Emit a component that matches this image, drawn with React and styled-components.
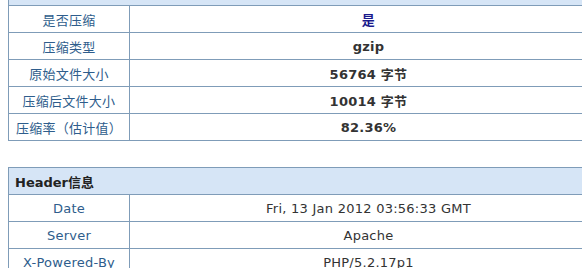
import React from "react";
import styled, { createGlobalStyle } from "styled-components";

const Global = createGlobalStyle`
  html, body { margin: 0; padding: 0; background: #fff; }
  body { overflow: hidden; }
`;

const Page = styled.div`
  padding: 0 8px;
  margin-top: -22px;
  font-family: "DejaVu Sans", Verdana, "Noto Sans CJK SC", sans-serif;
  font-size: 13px;
  letter-spacing: 0.25px;
`;

const Table = styled.table`
  width: 600px;
  border-collapse: collapse;
  border: 1px solid #7f9cb8;
  margin-bottom: ${(p) => p.$gap || 0}px;
`;

const HeadCell = styled.th`
  height: 26px;
  padding: 0 0 0 6px;
  background: #d6e5f6;
  border: 1px solid #7f9cb8;
  text-align: left;
  font-weight: bold;
  color: #222;
  font-size: 13px;
  letter-spacing: 0;
`;

const Label = styled.td`
  width: 120px;
  height: 26px;
  padding: 0;
  border: 1px solid #7f9cb8;
  text-align: center;
  color: #2e5d8c;
  font-size: 13px;
  font-family: "DejaVu Sans", "Noto Sans CJK SC", sans-serif;
`;

const Value = styled.td`
  height: 26px;
  padding: 0;
  border: 1px solid #7f9cb8;
  text-align: center;
  color: ${(p) => (p.$accent ? "#1a1a8c" : "#333")};
  font-weight: ${(p) => (p.$bold ? "bold" : "normal")};
  font-size: 13px;
`;

const compress = [
  ["是否压缩", "是", true],
  ["压缩类型", "gzip"],
  ["原始文件大小", "56764 字节"],
  ["压缩后文件大小", "10014 字节"],
  ["压缩率（估计值）", "82.36%"],
];

const headers = [
  ["Date", "Fri, 13 Jan 2012 03:56:33 GMT"],
  ["Server", "Apache"],
  ["X-Powered-By", "PHP/5.2.17p1"],
];

export default function App() {
  return (
    <Page>
      <Global />
      <Table $gap={26}>
        <tbody>
          <tr>
            <HeadCell colSpan={2} />
          </tr>
          {compress.map(([k, v, a]) => (
            <tr key={k}>
              <Label>{k}</Label>
              <Value $bold $accent={a}>{v}</Value>
            </tr>
          ))}
        </tbody>
      </Table>
      <Table>
        <tbody>
          <tr>
            <HeadCell colSpan={2}>Header信息</HeadCell>
          </tr>
          {headers.map(([k, v]) => (
            <tr key={k}>
              <Label>{k}</Label>
              <Value>{v}</Value>
            </tr>
          ))}
        </tbody>
      </Table>
    </Page>
  );
}
